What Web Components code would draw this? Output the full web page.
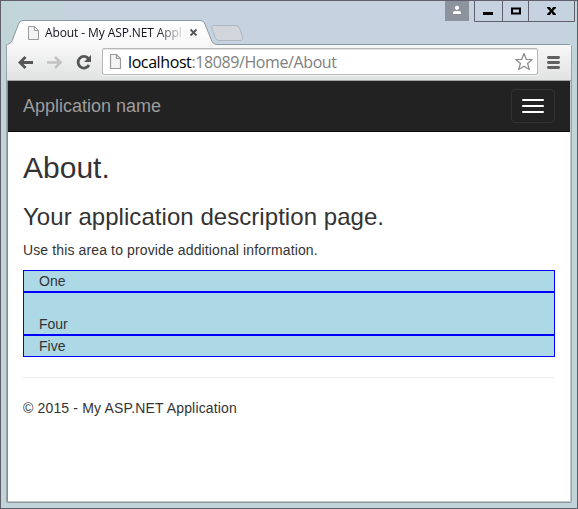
<!DOCTYPE html>
<html lang="en"><head><meta charset="utf-8"><title>About - My ASP.NET Application</title>
<style>html,body{margin:0;width:578px;height:509px;overflow:hidden;font-family:"Liberation Sans",Arial,sans-serif}</style></head>
<body>
<browser-window>
<window-titlebar slot="title"><browser-tab>About - My ASP.NET Appl</browser-tab></window-titlebar>
<browser-toolbar slot="tools"><span>localhost</span>:18089/Home/About</browser-toolbar>
<app-navbar>Application name</app-navbar>
<about-page>
<span slot="title">About.</span><span slot="subtitle">Your application description page.</span>
<span slot="lead">Use this area to provide additional information.</span>
<grid-cell>One</grid-cell><grid-cell tall>Four</grid-cell><grid-cell>Five</grid-cell>
<span slot="footer">© 2015 - My ASP.NET Application</span>
</about-page>
</browser-window>
<script>
function define(name, markup) {
  const t = document.createElement('template');
  t.innerHTML = markup;
  customElements.define(name, class extends HTMLElement {
    constructor() { super(); this.attachShadow({mode:'open'}).append(t.content.cloneNode(true)); }
  });
}
define('browser-window', `<style>
:host{display:flex;flex-direction:column;box-sizing:border-box;width:578px;height:509px;border:1px solid #5f606b;background:linear-gradient(90deg,#c1d5d9 0,#c3d4da 60px,#c6d2e0 66px,#c6d2e0 560px,#c1d5dc 576px) 0 0/100% 44px no-repeat,#c1d4da}
.frame{display:flex;flex-direction:column;margin:0 5px 5px;flex:1;box-sizing:border-box;border:1px solid #99a5ad;border-top:0;border-radius:0 3px 2px 2px;border-bottom:1px solid #89969e;min-height:0}
.view{flex:1;background:#fff;border:1px solid #c5c9cb;border-top:0;border-left-color:#828e95;min-height:0}
</style><slot name="title"></slot><div class="frame"><slot name="tools"></slot><div class="view"><slot></slot></div></div>`);
define('window-titlebar', `<style>
:host{display:flex;position:relative;height:43px;flex:none}
svg{position:absolute;left:0;top:0}.tab{position:relative;margin:20px 0 0 26px;width:178px}
</style>
<svg width="576" height="44" viewBox="1 1 576 44">
<defs><linearGradient id="g" x1="0" y1="0" x2="0" y2="1"><stop stop-color="#fff"/><stop offset="1" stop-color="#f7f7f7"/></linearGradient></defs>
<path d="M6.5 46Q8 43.5 11 42.5Q12.500 41 13.500 37L18.500 24Q19.500 20.500 23 20.500H200Q203.500 20.500 204.500 23L211 39Q212.500 44.500 217 44.500H569Q571.500 44.500 571.500 47H6.500Z" fill="url(#g)" stroke="#8d989f"/>
<path d="M213.500 25.500H236Q238.500 25.500 239.500 28L242.500 37Q243.500 40.500 240 40.500H219Q216.500 40.500 215.500 38L211.800 28Q211 25.500 213.500 25.500Z" fill="#d2d6dc" stroke="#aeb7c0"/>
<path d="M445 1h24v20h-24z" fill="#8c939c"/><circle cx="457" cy="7.800" r="2.100" fill="#fff"/><path d="M453 14v-1q0-2 2-2h4q2 0 2 2v1z" fill="#fff"/>
<path d="M474.500 1V21.500H574.500V1M502.500 1V21M528.500 1V21" fill="none" stroke="#5f606b"/>
<path d="M483 12h10v3h-10z"/><path d="M512 8.500h8v5h-8z" fill="none" stroke="#000" stroke-width="2"/>
<path d="M547 7h3l1.500 2.500L553 7h3v1l-3 3 3 3v1h-3l-1.500-2.500L550 15h-3v-1l3-3-3-3z"/>
</svg><div class="tab"><slot></slot></div>`);
define('browser-tab', `<style>
:host{display:flex;align-items:center;height:23px;font:12px/18px "Open Sans","Noto Sans",sans-serif;color:#14141e}
span{width:138px;margin-left:5px;overflow:hidden;white-space:nowrap;letter-spacing:-.1px;-webkit-mask-image:linear-gradient(90deg,#000 112px,transparent 142px)}
svg{flex:none}.x{margin-left:6px}
</style><svg width="13" height="14" viewBox="0 0 13 14"><path d="M1.500 .5h6l4 4v9h-10zM7.500 .5v4h4" fill="#f3f3f3" stroke="#999"/></svg><span><slot></slot></span><svg class="x" width="9" height="9"><path d="M1.500 1.500l6 6m0-6l-6 6" stroke="#53575a" stroke-width="1.800"/></svg>`);
define('browser-toolbar', `<style>
:host{display:flex;align-items:center;box-sizing:border-box;height:37px;background:linear-gradient(#f8f8f8,#e1e2e2);border-bottom:1px solid #a2a7a3;padding:0 10px 1px 11px}
.box{display:flex;align-items:center;box-sizing:border-box;width:436px;height:27px;margin-left:9px;border:1px solid #b7b7b7;border-radius:2px;background:#fff;box-shadow:inset 0 1px #e4e4e4,0 1px #f5f5f5;padding:0 3px 0 6px}
.url{font:16px/22px "Open Sans","Noto Sans",sans-serif;color:#808080;flex:1;margin-left:6px;white-space:nowrap;letter-spacing:-.4px}::slotted(span){color:#000}.menu{margin-left:9px}svg{flex:none}
</style>
<svg width="75" height="20" viewBox="18 52 75 20" fill="none"><path d="M33 62.500H20M25.500 57L20 62.500l5.500 5.500" stroke="#555" stroke-width="2.800"/><path d="M47 62.500h13M55 57l5.500 5.500L55 68" stroke="#c2c2c2" stroke-width="2.500"/><path d="M88.500 58.700A5.800 5.800 0 1 0 89 65" stroke="#555" stroke-width="2.800"/><path d="M91 55v7h-7z" fill="#555"/></svg>
<div class="box"><svg width="13" height="16"><path d="M1.500 .5h6l4 4v10h-10zM7.500 .5v4h4" fill="#f3f3f3" stroke="#999" stroke-width="1.200"/></svg><div class="url"><slot></slot></div><svg width="20" height="19"><path d="M10 1.500l2.300 6h5.900l-4.600 4 1.700 6L10 14.200 4.700 17.500l1.700-6-4.600-4h5.900z" fill="#fff" stroke="#8a8a8a" stroke-width="1.200" stroke-linejoin="round"/></svg></div>
<svg class="menu" width="13" height="14"><path d="M1.400 2.500h10.200M1.400 7.500h10.200M1.400 12.500h10.200" stroke="#606060" stroke-width="2.800" stroke-linecap="round"/></svg>`);
define('app-navbar', `<style>
:host{display:flex;justify-content:space-between;align-items:center;box-sizing:border-box;height:51px;background:#222;border-bottom:1px solid #080808;padding:0 15px;color:#9d9d9d;font-size:18px;line-height:20px}
.btn{box-sizing:border-box;width:44px;height:34px;border:1px solid #333;border-radius:4px;padding:9px 10px;display:flex;flex-direction:column;gap:4px}i{height:2px;background:#fff;border-radius:1px}
</style><slot></slot><div class="btn"><i></i><i></i><i></i></div>`);
define('about-page', `<style>
:host{display:block;padding:0 15px;color:#333;font-size:14px;line-height:20px}
h2,h3{font-weight:500;line-height:1.1;margin:19px 0 10px}h2{font-size:30px}h3{font-size:24px;margin-top:20px;letter-spacing:.05px}p{margin:0 0 10px;letter-spacing:.125px}.foot{letter-spacing:.16px}hr{border:0;border-top:1px solid #eee;margin:20px 0}
</style><h2><slot name="title"></slot></h2><h3><slot name="subtitle"></slot></h3><p><slot name="lead"></slot></p><slot></slot><hr><p class="foot"><slot name="footer"></slot></p>`);
define('grid-cell', `<style>
:host{display:flex;align-items:flex-end;box-sizing:border-box;height:22px;border:1px solid #00f;background:#add8e6;padding:0 15px}:host([tall]){height:43px}
</style><slot></slot>`);
</script>
</body></html>
